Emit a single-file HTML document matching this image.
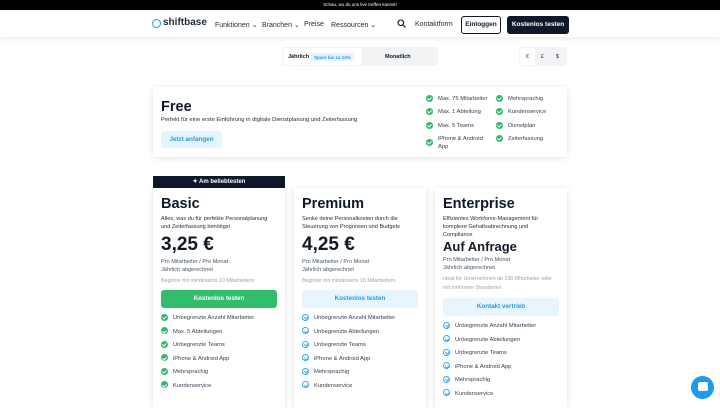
<!DOCTYPE html><html><head><meta charset="utf-8"><style>
*{margin:0;padding:0;box-sizing:border-box}
body{width:720px;height:405px;overflow:hidden;background:#fff;font-family:"Liberation Sans",sans-serif;color:#111827;position:relative}
.a{position:absolute}
.top{left:0;top:0;width:720px;height:10px;background:#000;color:#fff;font-size:4.5px;text-align:center;line-height:10px}
.nav{left:0;top:10px;width:720px;height:27px;background:#fff;box-shadow:0 2px 4px rgba(0,0,0,.08)}
.nl{font-size:7px;color:#1f2937;top:21px}
.card{background:#fff;box-shadow:0 1px 6px rgba(0,0,0,.12)}
.chk{display:inline-block;width:7px;height:7px;border-radius:50%;background:#2fb86a;vertical-align:middle;margin-right:5px;position:relative}
.chk:after{content:"";position:absolute;left:2px;top:1.2px;width:1.5px;height:3px;border:solid #fff;border-width:0 1px 1px 0;transform:rotate(45deg)}
.ochk{display:inline-block;width:7px;height:7px;border-radius:50%;border:1px solid #3ba6ee;vertical-align:middle;margin-right:5px;position:relative}
.ochk:after{content:"";position:absolute;left:1.5px;top:0.3px;width:1.5px;height:3px;border:solid #3ba6ee;border-width:0 1px 1px 0;transform:rotate(45deg)}
.f{font-size:5.8px;color:#374151;position:absolute}
.li{font-size:5.8px;color:#374151;height:13.5px;line-height:10px}
h2{font-size:14.5px;font-weight:800;color:#0f172a;line-height:16px}
.d{font-size:5.6px;color:#1f2937;line-height:8px;margin-top:3px}
.p{font-size:19px;font-weight:800;margin-top:3px;line-height:22px}
.s{font-size:5.6px;color:#4b5563;line-height:7.5px;margin-top:3px}
.g{font-size:5.3px;color:#9ca3af;line-height:8px;margin-top:3px}
.btn{height:18px;border-radius:3px;font-size:6.3px;font-weight:bold;text-align:center;line-height:18px;margin:5px 0 5px}
.inner{padding:8px 8px 0 8px}
</style></head><body>
<div class="a top">Schau, wo du uns live treffen kannst!</div>
<div class="a nav"></div>
<div class="a" style="left:152px;top:19px;width:9px;height:9px;border:1.8px solid #1e9be9;border-radius:50%"></div>
<div class="a" style="left:163px;top:17px;font-size:10px;font-weight:bold;color:#1f2937">shiftbase</div>
<div class="a nl" style="left:215px">Funktionen ⌄</div>
<div class="a nl" style="left:262px">Branchen ⌄</div>
<div class="a nl" style="left:304px">Preise</div>
<div class="a nl" style="left:331px">Ressourcen ⌄</div>
<svg class="a" style="left:397px;top:19px" width="9" height="9" viewBox="0 0 9 9"><circle cx="3.8" cy="3.8" r="2.8" fill="none" stroke="#111" stroke-width="1.1"/><path d="M6 6l2.5 2.5" stroke="#111" stroke-width="1.1"/></svg>
<div class="a nl" style="left:415px">Kontaktform</div>
<div class="a" style="left:461px;top:16px;width:40px;height:18px;border:1px solid #111827;border-radius:3px;font-size:6.5px;font-weight:bold;text-align:center;line-height:16px">Einloggen</div>
<div class="a" style="left:507px;top:16px;width:62px;height:18px;background:#0f172a;border-radius:3px;color:#fff;font-size:6.5px;font-weight:bold;text-align:center;line-height:18px">Kostenlos testen</div>
<div class="a" style="left:282px;top:47px;width:156px;height:19px;background:#f1f3f5;border-radius:3px"></div>
<div class="a" style="left:283px;top:48px;width:79px;height:17px;background:#fff;border-radius:3px"></div>
<div class="a" style="left:288px;top:54px;font-size:5.5px;font-weight:bold">Jährlich</div>
<div class="a" style="left:311px;top:53px;background:#e6f4fd;color:#1e9be9;font-size:4.5px;font-weight:bold;padding:1.5px 3px">Spare bis zu 13%</div>
<div class="a" style="left:385px;top:54px;font-size:5.5px;font-weight:bold">Monatlich</div>
<div class="a" style="left:519px;top:47px;width:48px;height:19px;background:#f1f3f5;border-radius:3px"></div>
<div class="a" style="left:520px;top:48px;width:15px;height:17px;background:#fff;border-radius:2px"></div>
<div class="a" style="left:526px;top:54px;font-size:5px">€</div><div class="a" style="left:541px;top:54px;font-size:5px">£</div><div class="a" style="left:556px;top:54px;font-size:5px">$</div>

<div class="a card" style="left:153px;top:87px;width:414px;height:70px"></div>
<div class="a" style="left:161px;top:99px;font-size:14.5px;font-weight:800">Free</div>
<div class="a" style="left:161px;top:117px;font-size:5.8px;color:#1f2937">Perfekt für eine erste Einführung in digitale Dienstplanung und Zeiterfassung</div>
<div class="a" style="left:161px;top:131px;width:61px;height:17px;background:#e6f4fd;border-radius:3px;color:#1e9be9;font-size:6.3px;font-weight:bold;text-align:center;line-height:17px">Jetzt anfangen</div>
<div class="f" style="left:426px;top:95px"><span class="chk"></span>Max. 75 Mitarbeiter</div>
<div class="f" style="left:426px;top:108px"><span class="chk"></span>Max. 1 Abteilung</div>
<div class="f" style="left:426px;top:122px"><span class="chk"></span>Max. 5 Teams</div>
<div class="f" style="left:426px;top:135px;line-height:8px"><span class="chk" style="float:left;margin-top:4px"></span>iPhone &amp; Android<br>App</div>
<div class="f" style="left:496px;top:95px"><span class="chk"></span>Mehrsprachig</div>
<div class="f" style="left:496px;top:108px"><span class="chk"></span>Kundenservice</div>
<div class="f" style="left:496px;top:122px"><span class="chk"></span>Dienstplan</div>
<div class="f" style="left:496px;top:135px"><span class="chk"></span>Zeiterfassung</div>

<div class="a" style="left:153px;top:176px;width:132px;height:12px;background:#0f172a;color:#fff;font-size:6px;font-weight:bold;text-align:center;line-height:12px">✦ Am beliebtesten</div>
<div class="a card inner" style="left:153px;top:188px;width:132px;height:220px">
<h2>Basic</h2><div class="d">Alles, was du für perfekte Personalplanung und Zeiterfassung benötigst</div>
<div class="p">3,25 €</div><div class="s">Pro Mitarbeiter / Pro Monat<br>Jährlich abgerechnet</div><div class="g">Beginne mit mindestens 10 Mitarbeitern</div>
<div class="btn" style="background:#32bd6b;color:#fff">Kostenlos testen</div>
<div class="li"><span class="chk"></span>Unbegrenzte Anzahl Mitarbeiter</div><div class="li"><span class="chk"></span>Max. 5 Abteilungen</div><div class="li"><span class="chk"></span>Unbegrenzte Teams</div><div class="li"><span class="chk"></span>iPhone &amp; Android App</div><div class="li"><span class="chk"></span>Mehrsprachig</div><div class="li"><span class="chk"></span>Kundenservice</div>
</div>
<div class="a card inner" style="left:294px;top:188px;width:132px;height:220px">
<h2>Premium</h2><div class="d">Senke deine Personalkosten durch die Steuerung von Prognosen und Budgets</div>
<div class="p">4,25 €</div><div class="s">Pro Mitarbeiter / Pro Monat<br>Jährlich abgerechnet</div><div class="g">Beginne mit mindestens 15 Mitarbeitern</div>
<div class="btn" style="background:#e9f5fe;color:#1e9be9">Kostenlos testen</div>
<div class="li"><span class="ochk"></span>Unbegrenzte Anzahl Mitarbeiter</div><div class="li"><span class="ochk"></span>Unbegrenzte Abteilungen</div><div class="li"><span class="ochk"></span>Unbegrenzte Teams</div><div class="li"><span class="ochk"></span>iPhone &amp; Android App</div><div class="li"><span class="ochk"></span>Mehrsprachig</div><div class="li"><span class="ochk"></span>Kundenservice</div>
</div>
<div class="a card inner" style="left:435px;top:188px;width:132px;height:220px">
<h2>Enterprise</h2><div class="d" style="padding-right:10px">Effizientes Workforce-Management für komplexe Gehaltsabrechnung und Compliance</div>
<div style="font-size:13px;font-weight:800;line-height:14px;margin-top:1px">Auf Anfrage</div><div class="s">Pro Mitarbeiter / Pro Monat<br>Jährlich abgerechnet</div><div class="g" style="line-height:9px">Ideal für Unternehmen ab 130 Mitarbeiter oder mit mehreren Standorten</div>
<div class="btn" style="background:#e9f5fe;color:#1e9be9;margin-top:5px">Kontakt vertrieb</div>
<div class="li"><span class="ochk"></span>Unbegrenzte Anzahl Mitarbeiter</div><div class="li"><span class="ochk"></span>Unbegrenzte Abteilungen</div><div class="li"><span class="ochk"></span>Unbegrenzte Teams</div><div class="li"><span class="ochk"></span>iPhone &amp; Android App</div><div class="li"><span class="ochk"></span>Mehrsprachig</div><div class="li"><span class="ochk"></span>Kundenservice</div>
</div>
<div class="a" style="left:691px;top:376px;width:23px;height:23px;border-radius:50%;background:#1e9be9"></div>
<div class="a" style="left:698px;top:382px;width:10px;height:9px;background:#fff;border-radius:2px"></div>
</body></html>
